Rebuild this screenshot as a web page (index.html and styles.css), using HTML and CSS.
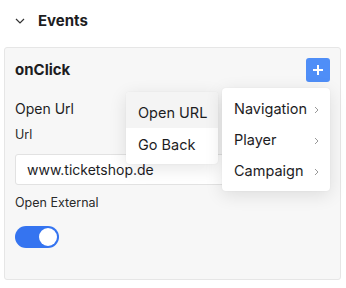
FILE: index.html
```html
<!DOCTYPE html>
<html>
<head>
<meta charset="utf-8">
<link rel="stylesheet" href="styles.css">
</head>
<body>
<div class="events">
  <svg class="caret" width="10" height="6" viewBox="0 0 10 6"><path d="M1 1 L5 5 L9 1" fill="none" stroke="#333" stroke-width="1.2"/></svg>
  <span class="events-title">Events</span>
</div>
<div class="panel">
  <div class="panel-head">
    <span class="panel-title">onClick</span>
    <button class="add-btn"><svg width="12" height="12" viewBox="0 0 12 12"><path d="M6 1 V11 M1 6 H11" stroke="#fff" stroke-width="2"/></svg></button>
  </div>
  <div class="action-name">Open Url</div>
  <div class="field-label">Url</div>
  <div class="input">www.ticketshop.de</div>
  <div class="field-label ext">Open External</div>
  <div class="toggle"><span class="knob"></span></div>

  <div class="menu menu-sub">
    <div class="item active">Open URL</div>
    <div class="item">Go Back</div>
  </div>
  <div class="menu menu-main">
    <div class="item">Navigation<svg class="chev" width="5" height="8" viewBox="0 0 5 8"><path d="M1 1 L4 4 L1 7" fill="none" stroke="#999" stroke-width="1"/></svg></div>
    <div class="item">Player<svg class="chev" width="5" height="8" viewBox="0 0 5 8"><path d="M1 1 L4 4 L1 7" fill="none" stroke="#999" stroke-width="1"/></svg></div>
    <div class="item">Campaign<svg class="chev" width="5" height="8" viewBox="0 0 5 8"><path d="M1 1 L4 4 L1 7" fill="none" stroke="#999" stroke-width="1"/></svg></div>
  </div>
</div>
</body>
</html>
```
FILE: styles.css
```css
* { box-sizing: border-box; }
html, body { margin: 0; background: #fff; }
body {
  font-family: Inter, "Noto Sans", sans-serif;
  color: #1d1d1f;
  width: 346px;
  height: 288px;
  overflow: hidden;
}
.events {
  display: flex;
  align-items: center;
  height: 47px;
  padding: 0 0 6px 15px;
}
.caret { margin-right: 13px; }
.events-title { font-size: 15px; font-weight: 700; }
.panel {
  position: relative;
  margin: 0 5px 0 4px;
  height: 233px;
  border: 1px solid #e6e6e6;
  border-radius: 3px;
  background: #f7f7f7;
  padding: 10px 10px 0 10px;
}
.panel-head {
  display: flex;
  justify-content: space-between;
  align-items: center;
  height: 24px;
}
.panel-title { font-size: 15px; font-weight: 700; line-height: 20px; }
.add-btn {
  width: 24px;
  height: 24px;
  border: none;
  border-radius: 3px;
  background: #4f8ef7;
  padding: 0;
  display: flex;
  align-items: center;
  justify-content: center;
}
.action-name { font-size: 14px; line-height: 20px; margin-top: 17px; }
.field-label { font-size: 12.5px; line-height: 16px; margin-top: 8px; color: #2a2a2a; }
.input {
  margin-top: 11px;
  height: 31px;
  background: #fff;
  border: 1px solid #e2e2e2;
  border-radius: 3px;
  font-size: 14px;
  line-height: 29px;
  padding-left: 11px;
}
.ext { margin-top: 10px; }
.toggle {
  margin-top: 15px;
  width: 44px;
  height: 22px;
  border-radius: 11px;
  background: #3574f0;
  position: relative;
}
.knob {
  position: absolute;
  right: 2px;
  top: 2px;
  width: 18px;
  height: 18px;
  border-radius: 50%;
  background: #fff;
}
.menu {
  position: absolute;
  background: #fff;
  border-radius: 4px;
  box-shadow: 0 4px 18px rgba(0,0,0,0.11), 0 0 2px rgba(0,0,0,0.05);
}
.menu .item { font-size: 14.5px; display: flex; align-items: center; }
.menu-sub { left: 121px; top: 44px; width: 92px; overflow: hidden; padding-bottom: 4px; }
.menu-sub .item { height: 32px; padding-left: 12px; }
.menu-sub .item.active { background: #f4f4f4; height: 36px; padding-top: 4px; }
.menu-main { left: 217px; top: 40px; width: 108px; padding: 5px 0; }
.menu-main .item { height: 31px; padding: 0 11px 0 12px; justify-content: space-between; }
.chev { margin-top: 2px; }
```
